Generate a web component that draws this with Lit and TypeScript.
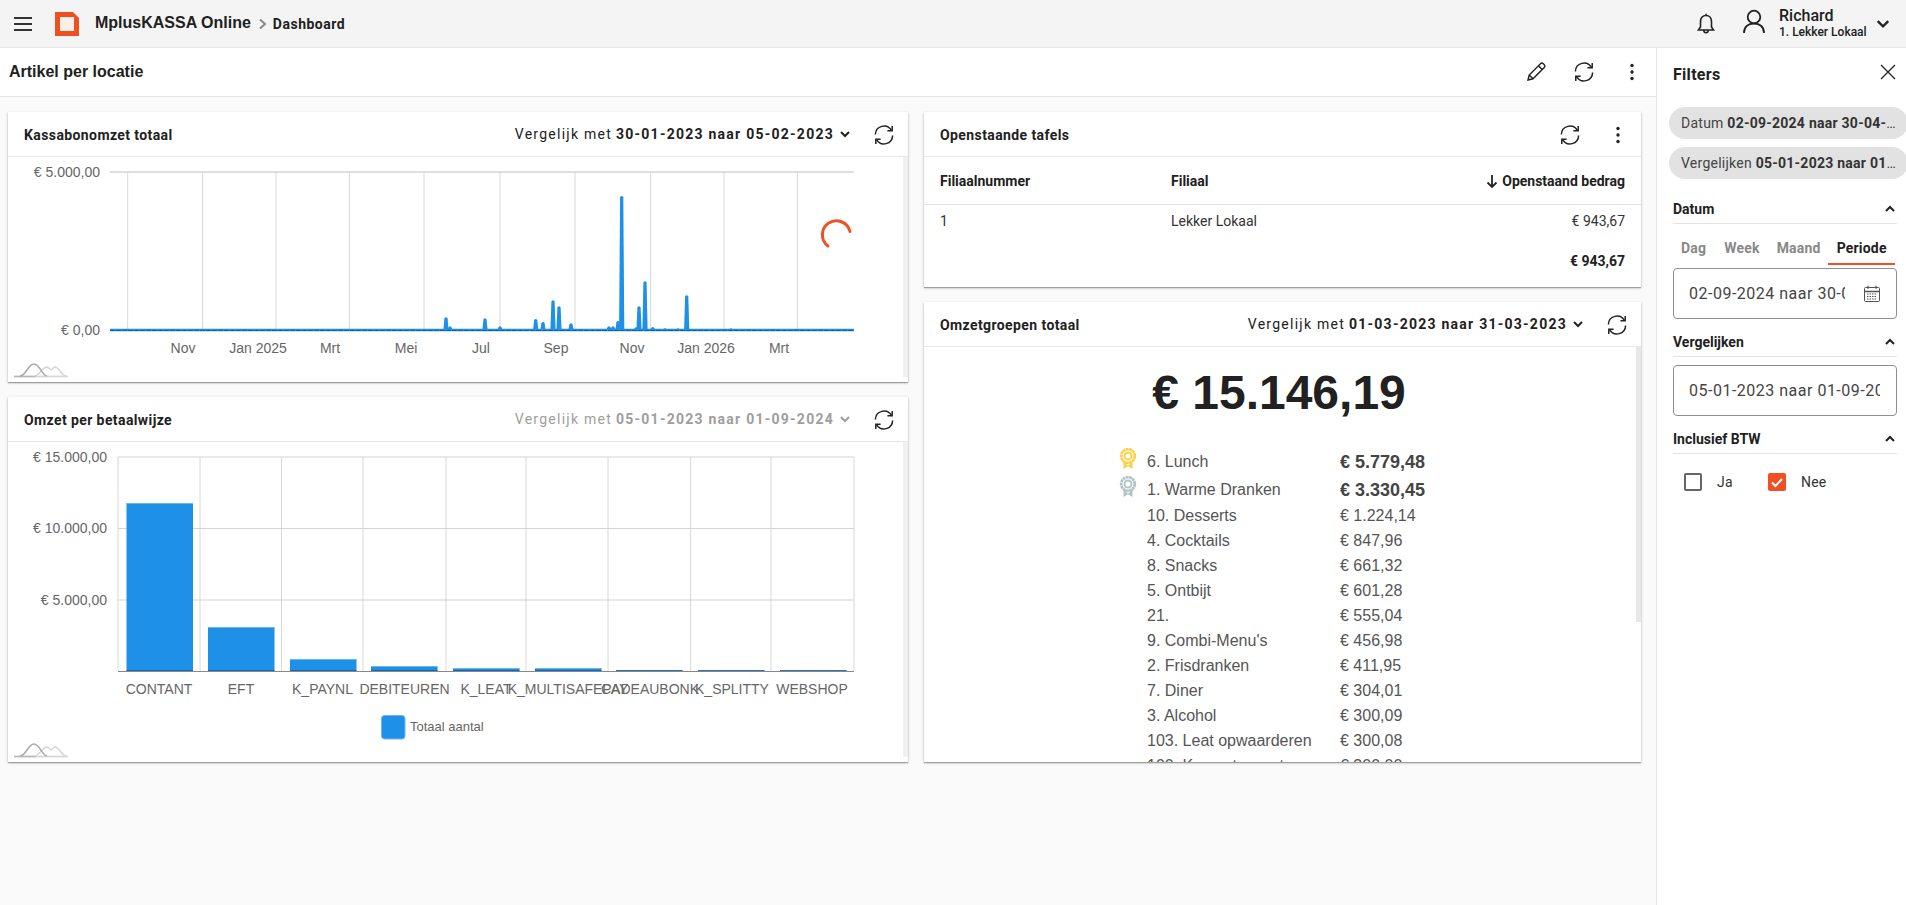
import { LitElement, html, css, svg } from "lit";
import { customElement } from "lit/decorators.js";

const refresh = html`<svg class="ic" width="24" height="24" viewBox="0 0 24 24" fill="none" stroke="#222" stroke-width="1.5"><path d="M3.4 11.500a8.600 8.600 0 0 1 16-4.200"/><path d="M20.200 3v4.800h-4.800"/><path d="M20.600 12.500a8.600 8.600 0 0 1-16 4.200"/><path d="M3.800 21v-4.800h4.800"/></svg>`;
const kebab = html`<svg class="ic" width="24" height="24" viewBox="0 0 24 24" fill="#222"><circle cx="12" cy="5.5" r="1.7"/><circle cx="12" cy="12" r="1.7"/><circle cx="12" cy="18.5" r="1.7"/></svg>`;
const chev = (c = "#222") => html`<svg class="chev" width="12" height="12" viewBox="0 0 12 12" fill="none" stroke="${c}" stroke-width="2"><path d="M2 4l4 4 4-4"/></svg>`;
const chevUp = html`<svg width="12" height="12" viewBox="0 0 12 12" fill="none" stroke="#222" stroke-width="2"><path d="M2 8l4-4 4 4"/></svg>`;

const spikes: [number, number][] = [[446,317],[450,326],[465.7,329],[485,318],[500,326],[535.7,318.7],[543,321.7],[553,300],[559,306],[571,323],[609,326],[613,326],[618,320.7],[621.7,195.7],[636,327],[639,306],[645,281],[652.7,326.7],[665,328],[678,328],[686.7,295],[715,329],[731,328]];

const medal = (c: string) => html`<svg class="medal" width="18" height="22" viewBox="0 0 18 22">
  <path d="M4.500 13h9v8l-4.500-2.800L4.500 21z" fill="${c}"/>
  <path d="M7.200 16.500l1.800 1 1.800-1v-1.500H7.200z" fill="#fff"/>
  <circle cx="9" cy="8" r="6.800" fill="#fff" stroke="${c}" stroke-width="2.800" stroke-dasharray="2.800 .5"/>
  <circle cx="9" cy="8" r="3.500" fill="none" stroke="${c}" stroke-width="1.900"/>
</svg>`;

const watermark = (oy: number) => svg`<g transform="translate(14,${oy})" fill="none" stroke-width="1.500">
  <path d="M22 13.500h32" stroke="#d8d8d8" stroke-width="1.800"/>
  <path d="M0 13.500h22" stroke="#b8b8b8" stroke-width="1.800"/>
  <path d="M21 13c4 0 7-9 12-9 2 0 3 3 4 3s2-3 4-3c4 0 7 9 11 9" stroke="#d4d4d4"/>
  <path d="M6 13c6 0 8-12 14-12s8 12 13 12" stroke="#aaa"/>
</g>`;

const groups: [string, string][] = [
  ["10. Desserts", "€ 1.224,14"], ["4. Cocktails", "€ 847,96"], ["8. Snacks", "€ 661,32"], ["5. Ontbijt", "€ 601,28"],
  ["21.", "€ 555,04"], ["9. Combi-Menu's", "€ 456,98"], ["2. Frisdranken", "€ 411,95"], ["7. Diner", "€ 304,01"],
  ["3. Alcohol", "€ 300,09"], ["103. Leat opwaarderen", "€ 300,08"], ["100. Kas ontvangst", "€ 300,00"],
];

@customElement("app-root")
export class AppRoot extends LitElement {
  static styles = css`
    :host { display: flex; flex-direction: column; width: 1906px; height: 905px; overflow: hidden; background: #fafafa; font-family: Roboto, sans-serif; color: #212121; }
    * { box-sizing: border-box; }
    .ic { display: block; flex: none; }
    .top { height: 48px; flex: none; background: #f4f4f4; border-bottom: 1px solid #e6e6e6; display: flex; align-items: center; }
    .burger { margin-left: 14px; width: 18px; display: flex; flex-direction: column; gap: 4px; }
    .burger i { display: block; height: 2px; background: #333; }
    .logo { margin-left: 23px; display: block; }
    .app { margin-left: 16px; font: bold 16px "Liberation Sans", sans-serif; margin-bottom: 2px; }
    .crumb { margin: 0 5px 0 7px; display: block; }
    .dash { font: 700 14px Roboto, sans-serif; letter-spacing: .5px; }
    .spacer { flex: 1; }
    .bell { margin-right: 25px; display: block; }
    .user { display: block; margin-right: 13px; margin-bottom: 4px; }
    .who { width: 92px; margin-right: 5px; }
    .who b { display: block; font: 500 16px/18px Roboto, sans-serif; }
    .who span { display: block; font: 500 12px/15px Roboto, sans-serif; white-space: nowrap; }
    .main { flex: 1; display: flex; min-height: 0; }
    .content { width: 1656px; flex: none; display: flex; flex-direction: column; }
    .sub { height: 49px; flex: none; background: #fff; border-bottom: 1px solid #e6e6e6; display: flex; align-items: center; padding: 0 12px 0 9px; gap: 24px; }
    .sub h1 { margin: 0; flex: 1; font: bold 16px "Liberation Sans", sans-serif; }
    .grid { display: grid; grid-template-columns: 900px 717px; column-gap: 16px; padding: 15px 0 0 8px; }
    .col { display: flex; flex-direction: column; gap: 15px; }
    .card { background: #fff; box-shadow: 0 1px 3px rgba(0,0,0,.2), 0 1px 1px rgba(0,0,0,.28); display: flex; flex-direction: column; overflow: hidden; }
    .h270 { height: 270px; } .h365 { height: 365px; } .h175 { height: 175px; } .h460 { height: 460px; }
    .ch { height: 45px; flex: none; border-bottom: 1px solid #e8e8e8; display: flex; align-items: center; padding: 2px 12px 0 16px; }
    .ch h2 { margin: 0; flex: 1; font: 700 14px Roboto, sans-serif; letter-spacing: .4px; }
    .cmp { font-size: 14px; letter-spacing: 1.25px; display: flex; align-items: center; margin-right: 21px; margin-bottom: 2px; white-space: nowrap; }
    .cmp b { font-weight: 700; margin-left: 4px; }
    .cmp .chev { margin-left: 5px; }
    .cmp.dis { color: #9e9e9e; }
    .body { flex: 1; display: flex; min-height: 0; overflow: hidden; }
    .body svg.chart { display: block; flex: none; }
    .sb { width: 5px; flex: none; background: #f0f0f0; margin-bottom: 5px; }
    text { font-family: "Liberation Sans", sans-serif; font-size: 14px; fill: #666; }
    .ch.r2 { gap: 24px; padding-right: 11px; }
    .row { display: grid; grid-template-columns: 231px 1fr auto; padding: 0 16px; font-size: 14px; align-items: center; }
    .th { height: 48px; border-bottom: 1px solid #e4e4e4; font-weight: 700; }
    .th .a { display: flex; align-items: center; gap: 2px; }
    .td { height: 40px; color: #333; padding-bottom: 8px; }
    .td.t { font-weight: 700; justify-content: end; color: #212121; }
    .om { flex: 1; min-width: 0; padding-top: 16px; }
    .big { font: bold 48px/60px "Liberation Sans", sans-serif; text-align: center; padding-right: 2px; }
    .list { margin: 25px 0 0 223px; font: 16px "Liberation Sans", sans-serif; color: #555; display: grid; grid-template-columns: 193px auto; justify-content: start; }
    .nm { height: 25px; line-height: 25px; white-space: nowrap; }
    .vl { height: 25px; line-height: 25px; white-space: nowrap; }
    .gold { height: 28px; line-height: 28px; position: relative; }
    .gold.s { height: 27px; }
    .vl.gold { font-weight: bold; font-size: 18px; color: #444; }
    .medal { position: absolute; left: -28px; top: 0; }
    .omsb { width: 5px; flex: none; align-self: flex-start; height: 275px; background: #e8e8e8; }
    .side { flex: 1; background: #fff; border-left: 1px solid #e6e6e6; padding: 0 9px 0 16px; overflow: hidden; min-width: 0; }
    .ft { height: 59px; padding-bottom: 7px; display: flex; align-items: center; justify-content: space-between; }
    .ft h3 { margin: 0; font: 700 16px Roboto, sans-serif; letter-spacing: .3px; }
    .x { display: block; margin-bottom: 4px; }
    .chip { width: 239px; margin-left: -4px; height: 32px; border-radius: 16px; background: #e2e2e2; padding: 0 12px; font-size: 14px; line-height: 32px; letter-spacing: .25px; color: #444; white-space: nowrap; overflow: hidden; text-overflow: ellipsis; margin-bottom: 8px; }
    .chip b { color: #333; font-weight: 700; }
    .sec { display: flex; justify-content: space-between; align-items: center; border-bottom: 1px solid #e4e4e4; height: 30px; font: 700 14px Roboto, sans-serif; padding-right: 1px; margin-top: 8px; }
    .sec.first { margin-top: 15px; }
    .tabs { display: flex; height: 41px; }
    .tab { font-size: 14px; font-weight: 700; color: #888; height: 41px; padding-top: 16px; white-space: nowrap; letter-spacing: .2px; }
    .t1 { padding-left: 8px; } .t2 { padding-left: 18px; } .t3 { padding-left: 17px; }
    .tab.on { color: #212121; border-bottom: 2px solid #f05023; margin-left: 7px; padding-left: 9px; padding-right: 8px; }
    .field { height: 51px; margin-top: 8px; border: 1px solid #8f8f8f; border-radius: 4px; display: flex; align-items: center; justify-content: space-between; padding: 0 16px 0 15px; font-size: 16px; letter-spacing: .5px; color: #444; }
    .field span { overflow: hidden; white-space: nowrap; }
    .f1 { margin-top: 3px; padding-right: 15px; }
    .f1 span { width: 156px; flex: none; }
    .checks { display: flex; align-items: center; padding: 19px 0 0 11px; font-size: 14px; color: #333; }
    .cb { width: 18px; height: 18px; border: 2px solid #666; border-radius: 2px; display: block; flex: none; }
    .cb.on { background: #f05023; border: none; }
    .lab { margin-left: 15px; width: 51px; letter-spacing: .2px; }
  `;

  chart1() {
    const oy = 157;
    const vs = [127.7, 202.5, 276, 349.4, 424, 500, 575, 650.6, 724, 797.4];
    const labs: [number, string][] = [[183, "Nov"], [258, "Jan 2025"], [330, "Mrt"], [406, "Mei"], [481, "Jul"], [556, "Sep"], [632, "Nov"], [706, "Jan 2026"], [779, "Mrt"]];
    return html`<svg class="chart" width="895" height="224" viewBox="8 ${oy} 895 224">
      <line x1="110" x2="854" y1="172" y2="172" stroke="#d4d4d4" stroke-width="1.5"/>
      ${vs.map((x) => svg`<line x1="${x}" x2="${x}" y1="172" y2="330" stroke="#d8d8d8"/>`)}
      ${spikes.map(([x, t]) => svg`<path d="M${x - 2.6} 330L${x - 1.6} ${t + 1.5}Q${x} ${t - 1} ${x + 1.6} ${t + 1.5}L${x + 2.6} 330Z" fill="#1e90e8"/>`)}
      <line x1="110" x2="854" y1="330" y2="330" stroke="#1e90e8" stroke-width="2.4"/>
      <line x1="110" x2="854" y1="330.5" y2="330.5" stroke="#145f9e" stroke-width="1.2" stroke-dasharray="5 1"/>
      <text x="100" y="177" text-anchor="end">€ 5.000,00</text>
      <text x="100" y="335" text-anchor="end">€ 0,00</text>
      ${labs.map(([x, s]) => svg`<text x="${x}" y="353" text-anchor="middle">${s}</text>`)}
      <path d="M850 231.500A14 14 0 1 0 828 246" fill="none" stroke="#f05023" stroke-width="3" stroke-linecap="round"/>
      ${watermark(363)}
    </svg><div class="sb"></div>`;
  }

  chart2() {
    const oy = 442;
    const vs = [118, 200, 281.5, 363, 446, 526, 608, 690.6, 771, 854];
    const bars: [number, number][] = [[126.5, 503], [208, 627], [290, 659], [371, 666], [453, 668], [535, 668], [616, 670.3], [698, 670.6], [780, 670.6]];
    const xl: [number, string][] = [[159, "CONTANT"], [241, "EFT"], [322.5, "K_PAYNL"], [404.5, "DEBITEUREN"], [486, "K_LEAT"], [568, "K_MULTISAFEPAY"], [650, "CADEAUBONK"], [732, "K_SPLITTY"], [812, "WEBSHOP"]];
    return html`<svg class="chart" width="895" height="320" viewBox="8 ${oy} 895 320">
      ${vs.map((x) => svg`<line x1="${x}" x2="${x}" y1="457" y2="671" stroke="#d8d8d8"/>`)}
      ${[457, 528.5, 600].map((y) => svg`<line x1="118" x2="854" y1="${y}" y2="${y}" stroke="#d4d4d4" stroke-width="1.2"/>`)}
      ${bars.map(([x, y]) => svg`<rect x="${x}" y="${y}" width="66.5" height="${671 - y}" fill="#1e90e8"/><rect x="${x}" y="${y}" width="66.5" height="1" fill="#6db5ef"/><rect x="${x}" y="670.2" width="66.5" height="1" fill="#145f9e"/>`)}
      <line x1="118" x2="854" y1="671.5" y2="671.5" stroke="#888" stroke-width="1"/>
      <text x="107" y="462" text-anchor="end">€ 15.000,00</text>
      <text x="107" y="533" text-anchor="end">€ 10.000,00</text>
      <text x="107" y="605" text-anchor="end">€ 5.000,00</text>
      ${xl.map(([x, s]) => svg`<text x="${x}" y="694" text-anchor="middle">${s}</text>`)}
      <rect x="381.5" y="715.5" width="23.5" height="23.5" rx="3" fill="#1e90e8" stroke="#6db5ef"/>
      <text x="410" y="731" style="font-size:13px">Totaal aantal</text>
      ${watermark(743)}
    </svg><div class="sb"></div>`;
  }

  render() {
    return html`
      <div class="top">
        <div class="burger"><i></i><i></i><i></i></div>
        <svg class="logo" width="24" height="24" viewBox="0 0 24 24"><path d="M0 0h18l6 6v18H0z" fill="#f0501f"/><rect x="5" y="5" width="14" height="14" fill="#fdeee8"/></svg>
        <span class="app">MplusKASSA Online</span>
        <svg class="crumb" width="10" height="14" viewBox="0 0 10 14" fill="none" stroke="#888" stroke-width="2"><path d="M2 2.5l5 4.5-5 4.5"/></svg>
        <span class="dash">Dashboard</span>
        <span class="spacer"></span>
        <svg class="bell" width="22" height="24" viewBox="0 0 22 24" fill="none" stroke="#222" stroke-width="1.6"><path d="M11 3.5c-3.6 0-5.5 2.7-5.5 6v5.5L3.5 18h15l-2-3V9.500c0-3.300-1.900-6-5.500-6zM11 3.500V1.800M8.800 18.500a2.200 2.200 0 0 0 4.400 0"/></svg>
        <svg class="user" width="24" height="26" viewBox="0 0 24 26" fill="none" stroke="#222" stroke-width="1.8"><circle cx="12" cy="8" r="6.300"/><path d="M2 24c0-6 4-9.500 10-9.500S22 18 22 24"/></svg>
        <div class="who"><b>Richard</b><span>1. Lekker Lokaal</span></div>
        <svg width="14" height="14" viewBox="0 0 12 12" fill="none" stroke="#222" stroke-width="2" style="margin-right:16px"><path d="M1.500 3.500L6 8l4.500-4.500"/></svg>
      </div>
      <div class="main">
        <div class="content">
          <div class="sub">
            <h1>Artikel per locatie</h1>
            <svg class="ic" width="24" height="24" viewBox="0 0 24 24" fill="none" stroke="#222" stroke-width="1.400"><path d="M4 20l1.200-5L16.500 3.700a2 2 0 0 1 2.800 0l1 1a2 2 0 0 1 0 2.800L9 18.800zM14.500 5.700l3.800 3.800M5.200 15l3.800 3.800"/></svg>
            ${refresh}${kebab}
          </div>
          <div class="grid">
            <div class="col">
              <div class="card h270">
                <div class="ch"><h2>Kassabonomzet totaal</h2><div class="cmp">Vergelijk met <b>30-01-2023 naar 05-02-2023</b>${chev()}</div>${refresh}</div>
                <div class="body">${this.chart1()}</div>
              </div>
              <div class="card h365">
                <div class="ch"><h2>Omzet per betaalwijze</h2><div class="cmp dis">Vergelijk met <b>05-01-2023 naar 01-09-2024</b>${chev("#9e9e9e")}</div>${refresh}</div>
                <div class="body">${this.chart2()}</div>
              </div>
            </div>
            <div class="col">
              <div class="card h175">
                <div class="ch r2"><h2>Openstaande tafels</h2>${refresh}${kebab}</div>
                <div class="row th"><span>Filiaalnummer</span><span>Filiaal</span><span class="a"><svg width="16" height="16" viewBox="0 0 16 16" fill="none" stroke="#222" stroke-width="1.800"><path d="M8 2v12M3.500 9.500L8 14l4.500-4.500"/></svg>Openstaand bedrag</span></div>
                <div class="row td"><span>1</span><span>Lekker Lokaal</span><span>€ 943,67</span></div>
                <div class="row td t"><span></span><span></span><span>€ 943,67</span></div>
              </div>
              <div class="card h460">
                <div class="ch"><h2>Omzetgroepen totaal</h2><div class="cmp">Vergelijk met <b>01-03-2023 naar 31-03-2023</b>${chev()}</div>${refresh}</div>
                <div class="body">
                  <div class="om">
                    <div class="big">€ 15.146,19</div>
                    <div class="list">
                      <div class="nm gold">${medal("#fbd045")}6. Lunch</div><div class="vl gold">€ 5.779,48</div>
                      <div class="nm gold s">${medal("#b3c2c6")}1. Warme Dranken</div><div class="vl gold s">€ 3.330,45</div>
                      ${groups.map(([a, b]) => html`<div class="nm">${a}</div><div class="vl">${b}</div>`)}
                    </div>
                  </div>
                  <div class="omsb"></div>
                </div>
              </div>
            </div>
          </div>
        </div>
        <div class="side">
          <div class="ft"><h3>Filters</h3><svg class="x" width="18" height="18" viewBox="0 0 18 18" fill="none" stroke="#222" stroke-width="1.300"><path d="M2 2l14 14M16 2L2 16"/></svg></div>
          <div class="chip">Datum <b>02-09-2024 naar 30-04-2026</b></div>
          <div class="chip">Vergelijken <b>05-01-2023 naar 01-09-2024</b></div>
          <div class="sec first">Datum ${chevUp}</div>
          <div class="tabs"><div class="tab t1">Dag</div><div class="tab t2">Week</div><div class="tab t3">Maand</div><div class="tab on">Periode</div></div>
          <div class="field f1"><span>02-09-2024 naar 30-04-2026</span>
            <svg width="18" height="18" viewBox="0 0 18 18" fill="none" stroke="#555"><rect x="1.500" y="2.500" width="15" height="14" rx="1"/><path d="M1.500 6.500h15M5 .8v3M13 .8v3" stroke-width="1.300"/><path d="M4 9h10M4 11.500h10M4 14h10" stroke-dasharray="1.500 1"/></svg>
          </div>
          <div class="sec">Vergelijken ${chevUp}</div>
          <div class="field"><span>05-01-2023 naar 01-09-2024</span></div>
          <div class="sec">Inclusief BTW ${chevUp}</div>
          <div class="checks">
            <span class="cb"></span><span class="lab">Ja</span>
            <svg class="cb on" viewBox="0 0 18 18" fill="none" stroke="#fff" stroke-width="2"><path d="M4 9.500l3.500 3.500L14 6"/></svg><span class="lab">Nee</span>
          </div>
        </div>
      </div>
    `;
  }
}
